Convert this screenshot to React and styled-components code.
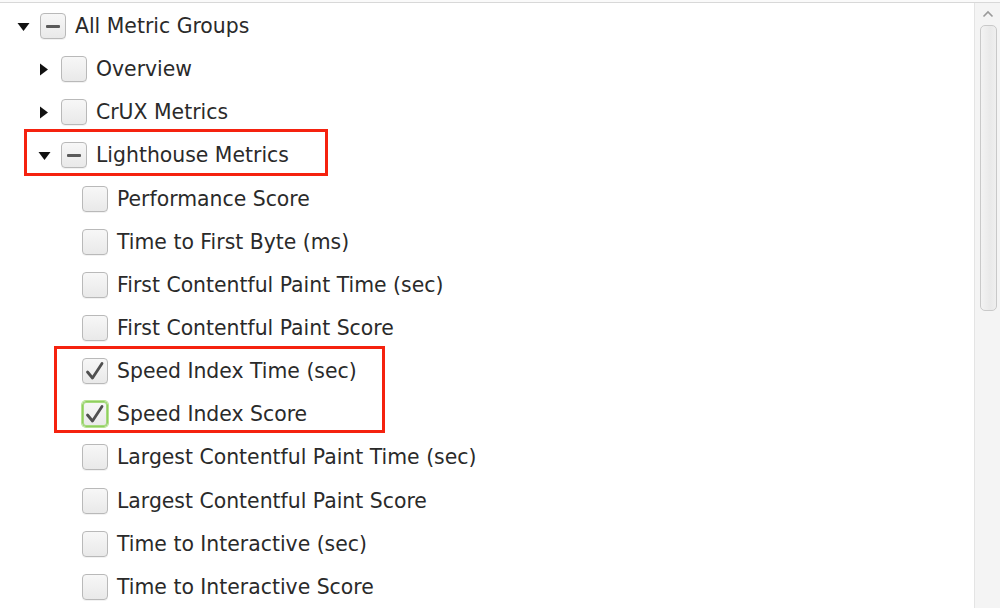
import React from 'react'
import styled, { createGlobalStyle } from 'styled-components'

const GlobalStyle = createGlobalStyle`
  html, body {
    margin: 0;
    padding: 0;
    background: #ffffff;
  }
  body {
    font-family: "DejaVu Sans", "Liberation Sans", sans-serif;
  }
`

const Frame = styled.div`
  position: relative;
  width: 1000px;
  height: 608px;
  overflow: hidden;
  background: #ffffff;
  display: flex;
  flex-direction: column;
`

const TopEdge = styled.div`
  height: 2px;
  flex: 0 0 2px;
  border-bottom: 1px solid #d8d8d8;
  background: #fafafa;
`

const Body = styled.div`
  flex: 1;
  display: flex;
  min-height: 0;
`

const Tree = styled.div`
  flex: 1;
  padding-top: 1.5px;
`

const Row = styled.div`
  height: 43.15px;
  display: flex;
  align-items: center;
  padding-left: ${p => 17 + p.level * 21}px;
`

const Toggle = styled.span`
  width: 23px;
  flex: 0 0 23px;
  display: flex;
  align-items: center;
`

const Box = styled.span`
  width: 26px;
  height: 26px;
  flex: 0 0 26px;
  box-sizing: border-box;
  border-radius: 4px;
  border: 1px solid ${p => (p.focus ? '#8fcf5f' : '#b9b9b9')};
  box-shadow: ${p =>
    p.focus ? '0 0 0 1px #b7e292, inset 0 0 0 1px #a6da7c' : '0 1px 0 rgba(0,0,0,0.05)'};
  background: linear-gradient(#f7f7f7, #e9e9e9);
  display: flex;
  align-items: center;
  justify-content: center;
  margin-right: 9px;
`

const Dash = styled.span`
  width: 14px;
  height: 3px;
  background: #5a5a5a;
  border-radius: 1px;
`

const Label = styled.span`
  font-size: 20.4px;
  color: #2a2a2a;
  white-space: nowrap;
`

const Scrollbar = styled.div`
  width: 25px;
  flex: 0 0 25px;
  background: #f4f4f4;
  border-left: 1px solid #e4e4e4;
  display: flex;
  flex-direction: column;
  align-items: center;
`

const ArrowUp = styled.div`
  height: 22px;
  display: flex;
  align-items: center;
  justify-content: center;
`

const Thumb = styled.div`
  width: 17px;
  height: 286px;
  margin-left: 1px;
  box-sizing: border-box;
  border: 1px solid #c9c9c9;
  border-radius: 5px;
  background: linear-gradient(90deg, #f3f3f3, #e9e9e9 60%, #efefef);
`

const Highlight = styled.div`
  position: absolute;
  border: 3.5px solid #f5220f;
  box-sizing: border-box;
  pointer-events: none;
`

const Caret = ({ open }) => (
  <svg width="13" height="13" viewBox="0 0 13 13">
    {open ? (
      <polygon points="0.5,3 12.5,3 6.5,11" fill="#111" />
    ) : (
      <polygon points="2,0.5 10,6.5 2,12.5" fill="#111" />
    )}
  </svg>
)

const Check = () => (
  <svg width="22" height="22" viewBox="0 0 22 22">
    <path
      d="M3.5 12 L8.5 18 L18 3.5"
      fill="none"
      stroke="#4f4f4f"
      strokeWidth="2.8"
      strokeLinecap="round"
      strokeLinejoin="round"
    />
  </svg>
)

const rows = [
  { level: 0, caret: 'open', state: 'mixed', text: 'All Metric Groups' },
  { level: 1, caret: 'closed', state: 'off', text: 'Overview' },
  { level: 1, caret: 'closed', state: 'off', text: 'CrUX Metrics' },
  { level: 1, caret: 'open', state: 'mixed', text: 'Lighthouse Metrics' },
  { level: 2, state: 'off', text: 'Performance Score' },
  { level: 2, state: 'off', text: 'Time to First Byte (ms)' },
  { level: 2, state: 'off', text: 'First Contentful Paint Time (sec)' },
  { level: 2, state: 'off', text: 'First Contentful Paint Score' },
  { level: 2, state: 'on', text: 'Speed Index Time (sec)' },
  { level: 2, state: 'on', focus: true, text: 'Speed Index Score' },
  { level: 2, state: 'off', text: 'Largest Contentful Paint Time (sec)' },
  { level: 2, state: 'off', text: 'Largest Contentful Paint Score' },
  { level: 2, state: 'off', text: 'Time to Interactive (sec)' },
  { level: 2, state: 'off', text: 'Time to Interactive Score' },
]

const App = () => (
  <>
    <GlobalStyle />
    <Frame>
      <TopEdge />
      <Body>
        <Tree>
          {rows.map((r, i) => (
            <Row key={i} level={r.level}>
              <Toggle>{r.caret && <Caret open={r.caret === 'open'} />}</Toggle>
              <Box focus={r.focus}>
                {r.state === 'mixed' && <Dash />}
                {r.state === 'on' && <Check />}
              </Box>
              <Label>{r.text}</Label>
            </Row>
          ))}
        </Tree>
        <Scrollbar>
          <ArrowUp>
            <svg width="12" height="8" viewBox="0 0 12 8">
              <path d="M1.5 6.5 L6 2 L10.5 6.5" fill="none" stroke="#9a9a9a" strokeWidth="1.6" />
            </svg>
          </ArrowUp>
          <Thumb />
        </Scrollbar>
      </Body>
      <Highlight style={{ left: 24, top: 129, width: 304, height: 47 }} />
      <Highlight style={{ left: 54, top: 346, width: 331, height: 87 }} />
    </Frame>
  </>
)

export default App
